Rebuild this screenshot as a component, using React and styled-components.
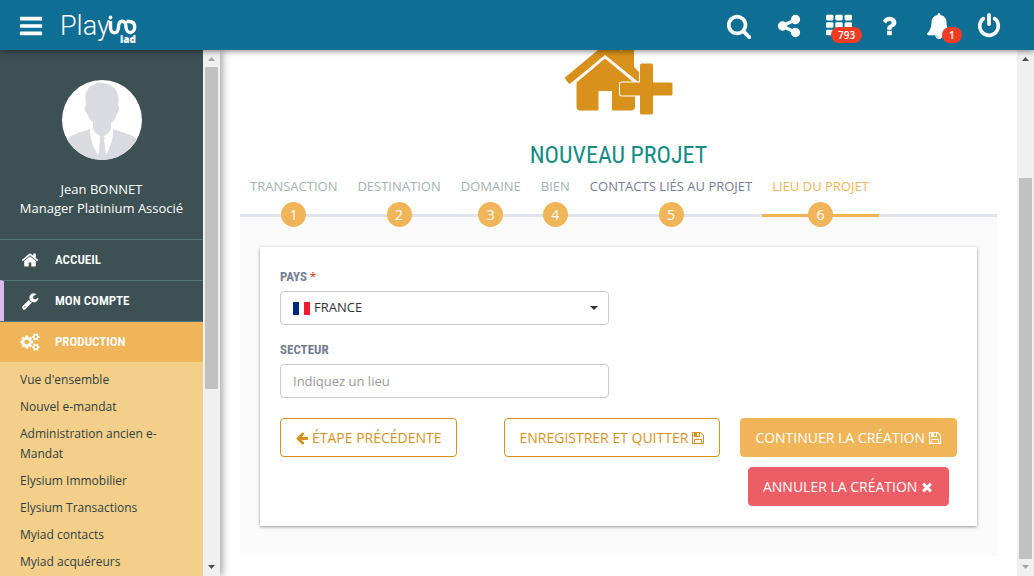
import React from "react";
import styled, { createGlobalStyle } from "styled-components";

const sans = `"Open Sans", "Liberation Sans", sans-serif`;
const narrow = `"Roboto Condensed", "Liberation Sans Narrow", Roboto, sans-serif`;

const Global = createGlobalStyle`
  * { box-sizing: border-box; }
  html, body, #root { height: 100%; }
  body { margin: 0; overflow: hidden; background: #fff; font-family: ${sans}; font-size: 13px; color: #333; }
  button, input, select { font-family: inherit; font-size: inherit; }
`;

const paths = {
  bars: "M1664 1344v128q0 26-19 45t-45 19h-1408q-26 0-45-19t-19-45v-128q0-26 19-45t45-19h1408q26 0 45 19t19 45zm0-512v128q0 26-19 45t-45 19h-1408q-26 0-45-19t-19-45v-128q0-26 19-45t45-19h1408q26 0 45 19t19 45zm0-512v128q0 26-19 45t-45 19h-1408q-26 0-45-19t-19-45v-128q0-26 19-45t45-19h1408q26 0 45 19t19 45z",
  search: "M1216 832q0-185-131.5-316.5t-316.5-131.5-316.5 131.5-131.5 316.5 131.5 316.5 316.5 131.5 316.5-131.5 131.5-316.5zm512 832q0 52-38 90t-90 38q-54 0-90-38l-343-342q-179 124-399 124-143 0-273.5-55.5t-225-150-150-225-55.5-273.5 55.5-273.5 150-225 225-150 273.5-55.5 273.5 55.5 225 150 150 225 55.5 273.5q0 220-124 399l343 343q37 37 37 90z",
  share: "M1344 1024q133 0 226.5 93.5t93.5 226.5-93.5 226.5-226.5 93.5-226.5-93.5-93.5-226.5q0-12 2-34l-360-180q-92 86-218 86-133 0-226.5-93.5t-93.5-226.5 93.5-226.5 226.5-93.5q126 0 218 86l360-180q-2-22-2-34 0-133 93.5-226.5t226.5-93.5 226.5 93.5 93.5 226.5-93.5 226.5-226.5 93.5q-126 0-218-86l-360 180q2 22 2 34t-2 34l360 180q92-86 218-86z",
  question: "M1088 1256v240q0 16-12 28t-28 12h-240q-16 0-28-12t-12-28v-240q0-16 12-28t28-12h240q16 0 28 12t12 28zm316-600q0 54-15.5 101t-35 76.5-55 59.5-57.5 43.5-61 35.5q-41 23-68.5 65t-27.5 67q0 17-12 32.5t-28 15.5h-240q-15 0-25.5-18.5t-10.5-37.5v-45q0-83 65-156.5t143-108.5q59-27 84-56t25-76q0-42-46.5-74t-107.5-32q-65 0-108 29-35 25-107 115-13 16-31 16-12 0-25-8l-164-125q-13-10-15.5-25t5.5-28q160-266 464-266 80 0 161 31t146 83 106 127.5 41 158.5z",
  bell: "M912 1696q0-16-16-16-59 0-101.5-42.5t-42.5-101.5q0-16-16-16t-16 16q0 73 51.5 124.5t124.5 51.5q16 0 16-16zm816-288q0 52-38 90t-90 38h-448q0 106-75 181t-181 75-181-75-75-181h-448q-52 0-90-38t-38-90q50-42 91-88t85-119.5 74.5-158.5 50-206 19.5-260q0-152 117-282.5t307-158.5q-8-19-8-39 0-40 28-68t68-28 68 28 28 68q0 20-8 39 190 28 307 158.5t117 282.5q0 139 19.5 260t50 206 74.5 158.5 85 119.5 91 88z",
  power: "M1664 896q0 156-61 298t-164 245-245 164-298 61-298-61-245-164-164-245-61-298q0-182 80.5-343t226.5-270q43-32 95.5-25t83.5 50q32 42 24.5 94.5t-49.5 84.5q-98 74-151.5 181t-53.5 228q0 104 40.5 198.5t109.5 163.5 163.5 109.5 198.5 40.5 198.5-40.5 163.5-109.5 109.5-163.5 40.5-198.5q0-121-53.5-228t-151.5-181q-42-32-49.5-84.5t24.5-94.5q31-43 84-50t95 25q146 109 226.5 270t80.5 343zm-640-768v640q0 52-38 90t-90 38-90-38-38-90v-640q0-52 38-90t90-38 90 38 38 90z",
  home: "M1472 992v480q0 26-19 45t-45 19h-384v-384h-256v384h-384q-26 0-45-19t-19-45v-480q0-1 .5-3t.5-3l575-474 575 474q1 2 1 6zm223-69l-62 74q-8 9-21 11h-3q-13 0-21-7l-692-577-692 577q-12 8-24 7-13-2-21-11l-62-74q-8-10-7-23.5t11-21.5l719-599q32-26 76-26t76 26l244 204v-195q0-14 9-23t23-9h192q14 0 23 9t9 23v408l219 182q10 8 11 21.5t-7 23.5z",
  wrench: "M448 1472q0-26-19-45t-45-19-45 19-19 45 19 45 45 19 45-19 19-45zm644-420l-682 682q-37 37-90 37-52 0-91-37l-106-108q-38-36-38-90 0-53 38-91l681-681q39 98 114.5 173.5t173.5 114.5zm634-435q0 39-23 106-47 134-164.5 217.5t-258.5 83.5q-185 0-316.5-131.5t-131.5-316.5 131.5-316.5 316.5-131.5q58 0 121.5 16.5t107.5 46.5q16 11 16 28t-16 28l-293 169v224l193 107q5-3 79-48.5t135.5-81 70.5-35.5q15 0 23.5 10t8.5 25z",
  cogs: "M896 896q0-106-75-181t-181-75-181 75-75 181 75 181 181 75 181-75 75-181zm768 512q0-52-38-90t-90-38-90 38-38 90q0 53 37.5 90.5t90.5 37.5 90.5-37.5 37.5-90.5zm0-1024q0-52-38-90t-90-38-90 38-38 90q0 53 37.5 90.5t90.5 37.5 90.5-37.5 37.5-90.5zm-384 421v185q0 10-7 19.5t-16 10.5l-155 24q-11 35-32 76 34 48 90 115 7 11 7 20 0 12-7 19-23 30-82.5 89.5t-78.5 59.5q-11 0-21-7l-115-90q-37 19-77 31-11 108-23 155-7 24-30 24h-186q-11 0-20-7.5t-10-17.5l-23-153q-34-10-75-31l-118 89q-7 7-20 7-11 0-21-8-144-133-144-160 0-9 7-19 10-14 41-53t47-61q-23-44-35-82l-152-24q-10-1-17-9.5t-7-19.5v-185q0-10 7-19.5t16-10.5l155-24q11-35 32-76-34-48-90-115-7-11-7-20 0-12 7-20 22-30 82-89t79-59q11 0 21 7l115 90q34-18 77-32 11-108 23-154 7-24 30-24h186q11 0 20 7.5t10 17.5l23 153q34 10 75 31l118-89q8-7 20-7 11 0 21 8 144 133 144 160 0 8-7 19-12 16-42 54t-45 60q23 48 34 82l152 23q10 2 17 10.5t7 19.5zm640 533v140q0 16-149 31-12 27-30 52 51 113 51 138 0 4-4 7-122 71-124 71-8 0-46-47t-52-68q-20 2-30 2t-30-2q-14 21-52 68t-46 47q-2 0-124-71-4-3-4-7 0-25 51-138-18-25-30-52-149-15-149-31v-140q0-16 149-31 13-29 30-52-51-113-51-138 0-4 4-7 4-2 35-20t59-34 30-16q8 0 46 46.5t52 67.5q20-2 30-2t30 2q51-71 92-112l6-2q4 0 124 70 4 3 4 7 0 25-51 138 17 23 30 52 149 15 149 31zm0-1024v140q0 16-149 31-12 27-30 52 51 113 51 138 0 4-4 7-122 71-124 71-8 0-46-47t-52-68q-20 2-30 2t-30-2q-14 21-52 68t-46 47q-2 0-124-71-4-3-4-7 0-25 51-138-18-25-30-52-149-15-149-31v-140q0-16 149-31 13-29 30-52-51-113-51-138 0-4 4-7 4-2 35-20t59-34 30-16q8 0 46 46.5t52 67.5q20-2 30-2t30 2q51-71 92-112l6-2q4 0 124 70 4 3 4 7 0 25-51 138 17 23 30 52 149 15 149 31z",
  arrow: "M1664 896v128q0 53-32.5 90.5t-84.5 37.5h-704l293 294q38 36 38 90t-38 90l-75 76q-37 37-90 37-52 0-91-37l-651-652q-37-37-37-90 0-52 37-91l651-650q38-38 91-38 52 0 90 38l75 74q38 38 38 91t-38 91l-293 293h704q52 0 84.5 37.5t32.5 90.5z",
  save: "M512 1536h768v-384h-768v384zm896 0h128v-896q0-14-10-38.5t-20-34.5l-281-281q-10-10-34-20t-39-10v416q0 40-28 68t-68 28h-576q-40 0-68-28t-28-68v-416h-128v1280h128v-416q0-40 28-68t68-28h832q40 0 68 28t28 68v416zm-384-928v-320q0-13-9.5-22.5t-22.5-9.5h-192q-13 0-22.5 9.5t-9.5 22.5v320q0 13 9.5 22.5t22.5 9.5h192q13 0 22.5-9.5t9.5-22.5zm640 32v928q0 40-28 68t-68 28h-1344q-40 0-68-28t-28-68v-1344q0-40 28-68t68-28h928q40 0 88 20t76 48l280 280q28 28 48 76t20 88z",
  times: "M1490 1322q0 40-28 68l-136 136q-28 28-68 28t-68-28l-294-294-294 294q-28 28-68 28t-68-28l-136-136q-28-28-28-68t28-68l294-294-294-294q-28-28-28-68t28-68l136-136q28-28 68-28t68 28l294 294 294-294q28-28 68-28t68 28l136 136q28 28 28 68t-28 68l-294 294 294 294q28 28 28 68z",
};

const Svg = styled.svg`
  display: block;
  flex: none;
  fill: currentColor;
`;

function Icon({ name, size, width }) {
  return (
    <Svg width={width || size} height={size} viewBox={`0 0 ${name === "cogs" ? 1920 : 1792} 1792`} aria-hidden="true">
      {name === "grid"
        ? [128, 640, 1152].map((y) =>
            [0, 640, 1280].map((x) => <rect key={`${x}-${y}`} x={x} y={y} width="512" height="384" rx="96" />)
          )
        : <path d={paths[name]} />}
    </Svg>
  );
}

const Page = styled.div`
  height: 100%;
  display: flex;
  flex-direction: column;
`;

const TopBar = styled.header`
  position: relative;
  z-index: 3;
  flex: none;
  display: flex;
  justify-content: space-between;
  height: 50px;
  padding: 2px 20px 0 18px;
  color: #fff;
  background: #0f6e94;
  box-shadow: 0 1px 6px rgba(0, 0, 0, 0.5);
`;

const Brand = styled.div`
  display: flex;
  align-items: center;
  gap: 16px;
`;

const Tools = styled.nav`
  display: flex;
`;

const IconButton = styled.button`
  position: relative;
  display: flex;
  align-items: center;
  justify-content: center;
  width: ${(p) => p.$width || "auto"};
  padding: 0;
  color: inherit;
  background: none;
  border: 0;
`;

const Badge = styled.span`
  position: absolute;
  top: 25px;
  left: ${(p) => p.$left};
  padding: 0 7px;
  font-size: 10px;
  font-weight: 600;
  line-height: 16px;
  background: #f03c24;
  border-radius: 8px;
`;

const LogoLink = styled.a`
  display: flex;
  color: inherit;
  text-decoration: none;
`;

const Body = styled.div`
  flex: 1;
  min-height: 0;
  display: flex;
`;

const Sidebar = styled.aside`
  position: relative;
  z-index: 2;
  flex: none;
  display: flex;
  width: 220px;
  box-shadow: 2px 0 8px rgba(0, 0, 0, 0.4);
`;

const SideContent = styled.div`
  flex: 1;
  overflow: hidden;
  background: #3d5053;
`;

const Profile = styled.div`
  display: flex;
  flex-direction: column;
  align-items: center;
  height: 189px;
  padding-top: 30px;
  color: #fff;
  line-height: 19px;
  text-align: center;
  svg { margin-bottom: 20px; }
`;

const MenuLink = styled.a`
  display: flex;
  align-items: center;
  gap: 15px;
  height: 41px;
  padding: 0 0 1px ${(p) => (p.$marked ? "16px" : "20px")};
  color: #fff;
  background: ${(p) => (p.$active ? "#f0b459" : "transparent")};
  border-top: 1px solid #53787b;
  border-left: ${(p) => (p.$marked ? "4px solid #d9b9e8" : "0")};
  font-family: ${narrow};
  font-size: 13px;
  font-weight: 600;
  text-decoration: none;
`;

const SubMenu = styled.ul`
  margin: 0;
  padding: 4px 20px 20px;
  list-style: none;
  background: #f3cf8a;
`;

const SubLink = styled.a`
  display: block;
  padding: 4px 0 3px;
  color: #2f3f41;
  font-size: 12px;
  line-height: 20px;
  text-decoration: none;
`;

const Track = styled.div`
  flex: none;
  display: flex;
  flex-direction: column;
  align-items: center;
  width: 17px;
  background: #f0f0f0;
`;

const TrackArrow = styled.svg`
  flex: none;
  width: 17px;
  height: 17px;
  fill: ${(p) => (p.$dim ? "#a3a3a3" : "#505050")};
`;

const TrackGap = styled.div`
  flex: ${(p) => p.$grow} 1 0;
`;

const Thumb = styled.div`
  flex: ${(p) => p.$grow} 1 0;
  width: 13px;
  background: #c1c1c1;
`;

const Main = styled.main`
  flex: 1;
  min-width: 0;
  overflow: hidden;
  padding: 0 20px;
`;

const Hero = styled.div`
  display: flex;
  flex-direction: column;
  align-items: center;
  height: 128px;
`;

const Title = styled.h1`
  margin: 23px 0 0;
  color: #138d84;
  font-family: ${narrow};
  font-size: 24px;
  line-height: 32px;
  font-weight: 400;
`;

const Steps = styled.ol`
  display: flex;
  height: 39px;
  margin: 0;
  padding: 0;
  list-style: none;
  border-bottom: 3px solid #dfe3ea;
`;

const Step = styled.li`
  height: 39px;
  border-bottom: 3px solid ${(p) => (p.$active ? "#f0b459" : "transparent")};
`;

const StepLink = styled.a`
  display: flex;
  flex-direction: column;
  align-items: center;
  gap: 8px;
  padding: 0 10px;
  color: ${(p) => p.$color};
  line-height: 16px;
  text-decoration: none;
  white-space: nowrap;
`;

const StepNumber = styled.span`
  width: 25px;
  height: 25px;
  color: #fff;
  background: #f0b459;
  border-radius: 50%;
  font-size: 14px;
  line-height: 25px;
  text-align: center;
`;

const Panel = styled.div`
  padding: 30px 20px;
  background: #fafafa;
`;

const Card = styled.form`
  padding: 20px;
  background: #fff;
  box-shadow: 0 1px 3px rgba(0, 0, 0, 0.4);
`;

const Fields = styled.div`
  display: grid;
  grid-template-columns: 1fr 1fr;
  gap: 15px 20px;
`;

const Field = styled.div`
  grid-column: 1;
`;

const Label = styled.label`
  display: block;
  margin-bottom: 4px;
  color: #757d92;
  font-family: ${narrow};
  font-size: 13px;
  line-height: 20px;
  font-weight: 700;
`;

const Required = styled.span`
  color: #f0503c;
`;

const Control = styled.div`
  display: flex;
  align-items: center;
  height: 34px;
  padding: 0 10px 0 12px;
  background: #fff;
  border: 1px solid #ccc;
  border-radius: 4px;
`;

const Select = styled.select`
  flex: 1;
  height: 32px;
  padding: 0 0 2px 4px;
  color: #333;
  background: none;
  border: 0;
  appearance: none;
  outline: 0;
`;

const TextInput = styled.input`
  flex: 1;
  height: 32px;
  padding: 0;
  background: none;
  border: 0;
  outline: 0;
  &::placeholder { color: #999; opacity: 1; }
`;

const Actions = styled.div`
  display: flex;
  justify-content: space-between;
  align-items: flex-start;
  margin-top: 20px;
`;

const ActionGroup = styled.div`
  display: flex;
  align-items: flex-start;
  gap: 20px;
`;

const ActionStack = styled.div`
  display: flex;
  flex-direction: column;
  align-items: center;
  gap: 10px;
`;

const kinds = {
  outline: ["#fff", "#d8921b", "#d8921b"],
  primary: ["#f0b459", "#f0b459", "#fff"],
  danger: ["#ed5d65", "#ed5d65", "#fff"],
};

const Button = styled.button`
  display: flex;
  align-items: center;
  gap: 3px;
  height: 39px;
  padding: 0 14px;
  color: ${(p) => kinds[p.$kind][2]};
  background: ${(p) => kinds[p.$kind][0]};
  border: 1px solid ${(p) => kinds[p.$kind][1]};
  border-radius: 4px;
  font-size: 14px;
  white-space: nowrap;
`;

function Scrollbar({ before, thumb, after, upDim, downDim }) {
  return (
    <Track aria-hidden="true">
      <TrackArrow viewBox="0 0 17 17" $dim={upDim}><path d="M5 11h7L8.500 7z" /></TrackArrow>
      <TrackGap $grow={before} />
      <Thumb $grow={thumb} />
      <TrackGap $grow={after} />
      <TrackArrow viewBox="0 0 17 17" $dim={downDim}><path d="M5 6h7L8.500 10z" /></TrackArrow>
    </Track>
  );
}

function Logo() {
  return (
    <svg width="84" height="44" viewBox="0 0 84 44" role="img" aria-label="Playin iad" fill="#fff">
      <text x="0" y="31" fontFamily="Roboto, sans-serif" fontWeight="300" fontSize="27">Play</text>
      <circle cx="50.500" cy="13.500" r="1.900" />
      <path d="M50.500 17v6.500c0 7 7.500 7 8 0v-1c.5-7 7-7 7.500 0v1c.5 7 8.700 6.500 8.700-.5 0-4-2.700-5.500-5.700-5.500h-2.500" fill="none" stroke="#fff" strokeWidth="3.400" />
      <text x="60" y="39" fontFamily="Open Sans, sans-serif" fontWeight="800" fontSize="10">iad</text>
    </svg>
  );
}

function Avatar() {
  return (
    <svg width="80" height="80" viewBox="0 0 80 80" role="img" aria-label="Jean BONNET">
      <clipPath id="disc"><circle cx="40" cy="40" r="40" /></clipPath>
      <g clipPath="url(#disc)">
        <rect width="80" height="80" fill="#fff" />
        <g fill="#dadbe0">
          <path d="M34 3C42 2 50 4 54 10c3 5 3 10 2 16 2 0 1 6-1 8-1 4-3 7-6 9v6c-2 4-5 6-9 8-4-2-8-5-9-8v-7c-3-2-5-5-6-9-3-2-3-7-1-8-1-7-1-12 2-16 2-3 4-4 8-5z" />
          <path d="M28 49C16 53 7 55 3 62v20h74V61c-5-6-14-8-26-12 1 9-3 18-7 26l-3-14 2-3-3-3-3 3 2 3-3 14c-5-8-8-17-8-26z" />
          <path d="M38 60h4l3 22H36z" />
        </g>
      </g>
    </svg>
  );
}

function HouseIcon() {
  return (
    <svg width="108" height="66" viewBox="565 50 108 66" aria-hidden="true" fill="#d8921b">
      <path d="M576.500 82.500 605 58.500l30 25v23q0 4-4 4h-19V91h-13.500v19.500H580q-3.500 0-3.500-4z" />
      <path d="M565.500 79.500q-1-1.500 0-2.500L598 50h22l1.500 1V50H634v17l5 5v10.500L605 55l-34 28q-1.500 1.500-3-.5z" />
      <path d="M641.500 63.500h10q1.500 0 1.500 1.500v17.500h18q1.500 0 1.500 1.500v10q0 1.500-1.500 1.500h-18V113q0 1.500-1.500 1.500h-10q-1.500 0-1.500-1.500V95.500h-18q-2 0-2-1.500V84q0-1.500 2-1.500h18V65q0-1.500 1.500-1.500z" stroke="#fff" strokeWidth="2" paintOrder="stroke" />
    </svg>
  );
}

const subItems = ["Vue d'ensemble", "Nouvel e-mandat", "Administration ancien e-Mandat", "Elysium Immobilier", "Elysium Transactions", "Myiad contacts", "Myiad acquéreurs"];
const steps = [
  ["TRANSACTION", "#a3b3b3"],
  ["DESTINATION", "#a3b3b3"],
  ["DOMAINE", "#a3b3b3"],
  ["BIEN", "#a3b3b3"],
  ["CONTACTS LIÉS AU PROJET", "#757d92"],
  ["LIEU DU PROJET", "#f0b459"],
];

export default function App() {
  return (
    <Page>
      <Global />
      <TopBar>
        <Brand>
          <IconButton aria-label="Menu"><Icon name="bars" size={26} /></IconButton>
          <LogoLink href="#"><Logo /></LogoLink>
        </Brand>
        <Tools>
          <IconButton $width="50px" aria-label="Rechercher"><Icon name="search" size={26} /></IconButton>
          <IconButton $width="50px" aria-label="Partager"><Icon name="share" size={26} /></IconButton>
          <IconButton $width="50px" aria-label="Applications"><Icon name="grid" size={26} /><Badge $left="17px">793</Badge></IconButton>
          <IconButton $width="50px" aria-label="Aide"><Icon name="question" size={26} /></IconButton>
          <IconButton $width="50px" aria-label="Notifications"><Icon name="bell" size={26} /><Badge $left="28px">1</Badge></IconButton>
          <IconButton $width="50px" aria-label="Déconnexion"><Icon name="power" size={26} /></IconButton>
        </Tools>
      </TopBar>
      <Body>
        <Sidebar>
          <SideContent>
            <Profile>
              <Avatar />
              <span>Jean BONNET</span>
              <span>Manager Platinium Associé</span>
            </Profile>
            <nav>
              <MenuLink href="#"><Icon name="home" size={18} width={20} />ACCUEIL</MenuLink>
              <MenuLink href="#" $marked><Icon name="wrench" size={18} width={20} />MON COMPTE</MenuLink>
              <MenuLink href="#" $active><Icon name="cogs" size={18} width={20} />PRODUCTION</MenuLink>
              <SubMenu>
                {subItems.map((t) => <li key={t}><SubLink href="#">{t}</SubLink></li>)}
              </SubMenu>
            </nav>
          </SideContent>
          <Scrollbar before={0} thumb={322} after={170} upDim />
        </Sidebar>
        <Main>
          <Hero>
            <HouseIcon />
            <Title>NOUVEAU PROJET</Title>
          </Hero>
          <Steps>
            {steps.map(([name, color], i) => (
              <Step key={name} $active={i === 5}>
                <StepLink href="#" $color={color}>{name}<StepNumber>{i + 1}</StepNumber></StepLink>
              </Step>
            ))}
          </Steps>
          <Panel>
            <Card>
              <Fields>
                <Field>
                  <Label htmlFor="pays">PAYS <Required>*</Required></Label>
                  <Control>
                    <svg width="17" height="13" viewBox="0 0 17 13" aria-hidden="true">
                      <rect width="6" height="13" fill="#00267f" />
                      <rect x="11" width="6" height="13" fill="#f9192f" />
                    </svg>
                    <Select id="pays" defaultValue="FRANCE"><option>FRANCE</option></Select>
                    <svg width="8" height="4" viewBox="0 0 8 4" aria-hidden="true"><path d="M0 0h8L4 4z" fill="#333" /></svg>
                  </Control>
                </Field>
                <Field>
                  <Label htmlFor="secteur">SECTEUR</Label>
                  <Control><TextInput id="secteur" type="text" placeholder="Indiquez un lieu" /></Control>
                </Field>
              </Fields>
              <Actions>
                <Button type="button" $kind="outline"><Icon name="arrow" size={14} />ÉTAPE PRÉCÉDENTE</Button>
                <ActionGroup>
                  <Button type="button" $kind="outline">ENREGISTRER ET QUITTER<Icon name="save" size={14} /></Button>
                  <ActionStack>
                    <Button type="button" $kind="primary">CONTINUER LA CRÉATION<Icon name="save" size={14} /></Button>
                    <Button type="button" $kind="danger">ANNULER LA CRÉATION<Icon name="times" size={14} /></Button>
                  </ActionStack>
                </ActionGroup>
              </Actions>
            </Card>
          </Panel>
        </Main>
        <Scrollbar before={111} thumb={381} after={0} downDim />
      </Body>
    </Page>
  );
}
